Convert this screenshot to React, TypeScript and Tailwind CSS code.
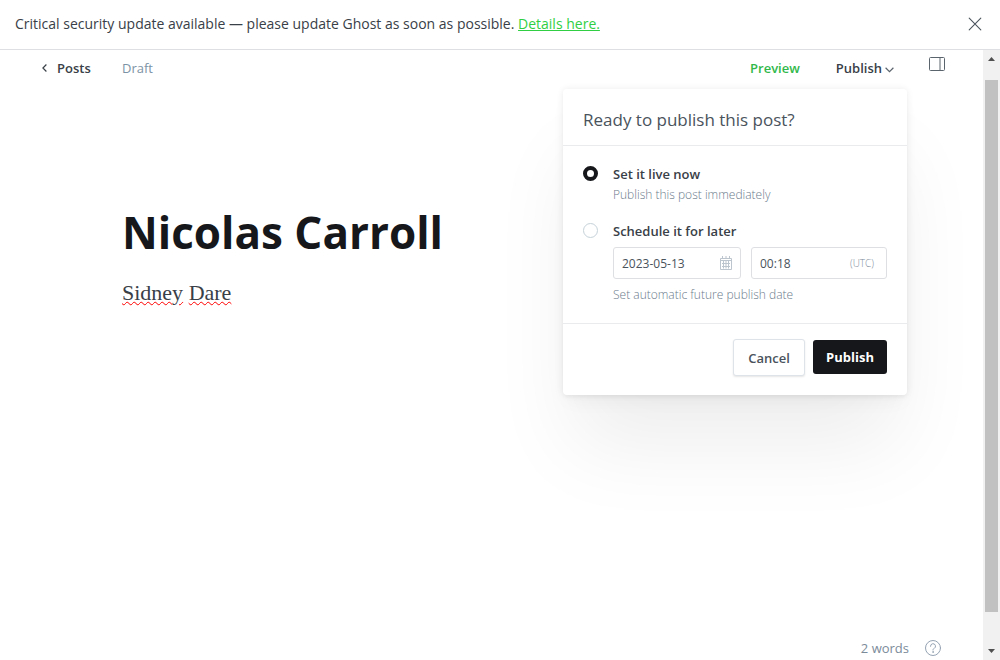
import { useState } from "react";

function CloseIcon() {
  return (
    <svg width="14" height="14" viewBox="0 0 14 14" fill="none" stroke="#4b545c" strokeWidth="1.1" strokeLinecap="round" aria-hidden="true">
      <path d="M1.2 1.2 12.8 12.8M12.8 1.2 1.2 12.8" />
    </svg>
  );
}

function SidebarIcon() {
  return (
    <svg width="16" height="14" viewBox="0 0 16 14" fill="none" stroke="#5a646c" aria-hidden="true">
      <rect x="0.5" y="0.5" width="15" height="13" rx="1" />
      <path d="M11 0.5v13" />
    </svg>
  );
}

function CalendarIcon() {
  return (
    <svg width="12" height="14" viewBox="0 0 12 14" fill="none" stroke="#bcc4cd" aria-hidden="true">
      <path d="M0.5 2.5h11v11h-11z" />
      <path d="M0.5 4.5h11M2 7.5h8M2 10.5h8M3.5 5v7.5M6 5v7.5M8.5 5v7.5M2.5 0v3M6 0v3M9.5 0v3" />
    </svg>
  );
}

function HelpIcon() {
  return (
    <svg width="16" height="16" viewBox="0 0 16 16" fill="none" stroke="#95a3b3" strokeLinecap="round" aria-hidden="true">
      <circle cx="8" cy="8" r="7.5" />
      <path d="M5.5 6.3a2.5 2.5 0 1 1 3.7 2.1c-.9.5-1.2.8-1.2 1.6" />
      <circle cx="8" cy="12" r="0.35" fill="#95a3b3" />
    </svg>
  );
}

const radioClass =
  "size-[15px] shrink-0 appearance-none rounded-full border border-[#c5d2d9] bg-white checked:border-4 checked:border-[#15171a]";

function PublishMenu() {
  const [mode, setMode] = useState("now");
  return (
    <div
      role="dialog"
      aria-labelledby="publish-title"
      className="absolute top-[39px] right-0 w-[344px] rounded-[4px] bg-white shadow-[0_0_7px_rgba(0,0,0,0.08),0_3px_3px_rgba(0,0,0,0.02),0_10px_18px_-4px_rgba(0,0,0,0.04),0_60px_80px_-10px_rgba(0,0,0,0.07)]"
    >
      <h2 id="publish-title" className="border-b border-[#e9ebed] px-5 pt-[19px] pb-[13px] text-[17px] leading-6 text-[#4a535c]">
        Ready to publish this post?
      </h2>
      <div className="flex flex-col gap-[18px] px-5 pt-5 pb-[18px]">
        <div className="flex gap-[15px]">
          <input id="now" type="radio" name="when" className={radioClass} checked={mode === "now"} onChange={() => setMode("now")} />
          <div>
            <label htmlFor="now" className="block text-[13px] leading-4 font-semibold text-[#394047]">Set it live now</label>
            <p className="mt-[3px] text-[12px] leading-5 font-light text-[#6b7b8b]">Publish this post immediately</p>
          </div>
        </div>
        <div className="flex gap-[15px]">
          <input id="later" type="radio" name="when" className={radioClass} checked={mode === "later"} onChange={() => setMode("later")} />
          <div className="min-w-0 flex-1">
            <label htmlFor="later" className="block text-[13px] leading-4 font-semibold text-[#394047]">Schedule it for later</label>
            <div className="mt-2 flex gap-[10px]">
              <div className="flex h-8 w-32 items-center rounded-[3px] border border-[#dddfe2] px-2">
                <input aria-label="Date" defaultValue="2023-05-13" className="w-0 flex-1 pt-[2px] text-[12px] leading-5 text-[#4a535c] outline-none" />
                <CalendarIcon />
              </div>
              <div className="flex h-8 flex-1 items-center rounded-[3px] border border-[#dddfe2] pr-3 pl-2">
                <input aria-label="Time" defaultValue="00:18" className="w-0 flex-1 pt-[2px] text-[12px] leading-5 text-[#4a535c] outline-none" />
                <span className="text-[10px] font-light text-[#7c8b9a]">(UTC)</span>
              </div>
            </div>
            <p className="mt-[6px] text-[12px] leading-5 font-light text-[#6b7b8b]">Set automatic future publish date</p>
          </div>
        </div>
      </div>
      <div className="flex items-start justify-end gap-2 border-t border-[#e9ebed] px-5 pt-[15px] pb-[19px]">
        <button type="button" className="h-[37px] w-[72px] rounded-[3px] border border-[#dde3e8] bg-white pt-[2px] text-[13px] font-semibold text-[#4a535c] shadow-[0_1px_2px_rgba(0,0,0,0.1)]">
          Cancel
        </button>
        <button type="button" className="mt-[1px] h-[34px] w-[74px] rounded-[3px] bg-[#15171a] pt-[2px] text-[13px] font-bold text-white">
          Publish
        </button>
      </div>
    </div>
  );
}

export default function App() {
  return (
    <div className="flex h-screen flex-col bg-white font-['Open_Sans',sans-serif]">
      <aside className="flex h-[50px] shrink-0 items-center justify-between border-b border-[#dddfe2] pr-[18px] pb-[2px] pl-[15px] text-[14px] text-[#394047]">
        <p>
          Critical security update available — please update Ghost as soon as possible.{" "}
          <a href="#details" className="text-[#30cf43] underline">Details here.</a>
        </p>
        <button type="button" aria-label="Close"><CloseIcon /></button>
      </aside>
      <div className="flex min-h-0 flex-1">
        <div className="flex min-w-0 flex-1 flex-col">
          <header className="flex h-9 items-center justify-between pr-[38px] pl-[42px] text-[13px]">
            <nav className="flex items-center pt-[2px]">
              <a href="#posts" className="flex w-20 items-center gap-[10px] font-semibold text-[#394047]">
                <svg width="5" height="8" viewBox="0 0 5 8" fill="none" stroke="#394047" strokeWidth="1.2" className="mb-[2px]" aria-hidden="true">
                  <path d="M4.4 0.5 0.9 4l3.5 3.5" />
                </svg>
                Posts
              </a>
              <span className="text-[#7c93a5]">Draft</span>
            </nav>
            <div className="flex h-9 items-center">
              <button type="button" className="mr-[23px] pt-[2px] font-semibold text-[#30b84a]">Preview</button>
              <div className="relative flex h-9 items-center">
                <button type="button" aria-expanded="true" className="flex items-center gap-[3px] px-[13px] pt-[2px] font-semibold text-[#394047]">
                  Publish
                  <svg width="9" height="6" viewBox="0 0 9 6" fill="none" stroke="#5a646c" strokeWidth="1.2" className="mt-[2px]" aria-hidden="true">
                    <path d="M0.6 0.8 4.5 4.6 8.4 0.8" />
                  </svg>
                </button>
                <PublishMenu />
              </div>
              <button type="button" aria-label="Settings" className="mb-2 ml-[22px]"><SidebarIcon /></button>
            </div>
          </header>
          <main className="flex-1 px-[122px] pt-[116px]">
            <h1 className="text-[44px] leading-[60px] font-bold text-[#15171a]">Nicolas Carroll</h1>
            <p className="mt-[15px] font-['Liberation_Serif',serif] text-[22px] leading-8 text-[#394047]">
              <span className="underline decoration-[#f00] decoration-wavy decoration-1">Sidney</span>{" "}
              <span className="underline decoration-[#f00] decoration-wavy decoration-1">Dare</span>
            </p>
          </main>
          <footer className="flex h-6 items-center justify-end gap-4 pr-[42px] text-[13px] text-[#7c8b9a]">
            <span className="pt-[2px]">2 words</span>
            <button type="button" aria-label="Help"><HelpIcon /></button>
          </footer>
        </div>
        <div aria-hidden="true" className="flex w-[17px] shrink-0 flex-col items-center bg-[#f1f1f1]">
          <svg width="17" height="30" viewBox="0 0 17 30" fill="#505050"><path d="M5 11h7L8.5 7z" /></svg>
          <div className="w-[13px] flex-1 bg-[#c1c1c1]" />
          <svg width="17" height="48" viewBox="0 0 17 48" fill="#505050"><path d="M5 37h7l-3.5 4z" /></svg>
        </div>
      </div>
    </div>
  );
}
